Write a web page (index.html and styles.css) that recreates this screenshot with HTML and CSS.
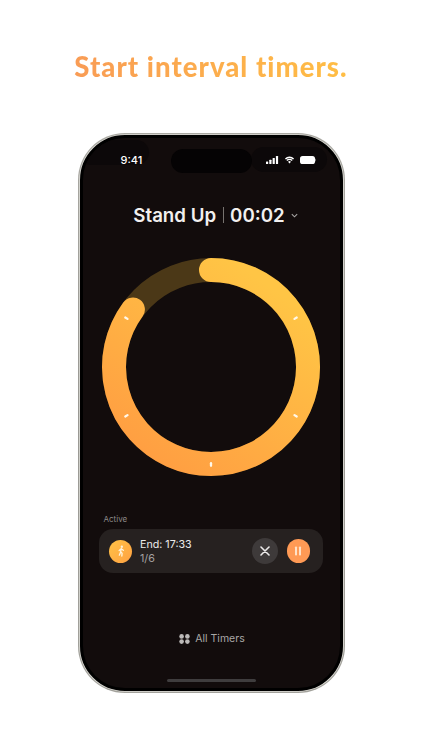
FILE: index.html
```html
<!DOCTYPE html>
<html lang="en">
<head>
<meta charset="utf-8">
<title>Start interval timers</title>
<link rel="stylesheet" href="styles.css">
</head>
<body>
<main class="page">
  <h1 class="headline">Start interval timers.</h1>
  <div class="phone">
    <div class="screen">
      <span class="blob blob-left"></span>
      <span class="blob blob-right"></span>
      <span class="island"></span>
      <div class="status">
        <span class="clock">9:41</span>
        <span class="status-icons">
          <svg class="sig" viewBox="0 0 13 8"><rect x="0" y="5.4" width="2.2" height="2.6" rx=".5"/><rect x="3.3" y="3.8" width="2.2" height="4.2" rx=".5"/><rect x="6.6" y="2" width="2.2" height="6" rx=".5"/><rect x="9.9" y="0" width="2.2" height="8" rx=".5"/></svg>
          <svg class="wifi" viewBox="0 0 12 9"><path d="M1.4 3.3A6.5 6.5 0 0 1 10.6 3.3M3 5a4.2 4.2 0 0 1 6 0" fill="none" stroke="#fff" stroke-width="1.5"/><path d="M4.4 6.5a2.3 2.3 0 0 1 3.2 0L6 8.3z" fill="#fff"/></svg>
          <svg class="batt" viewBox="0 0 16 8"><rect x="0" y="0" width="15" height="8" rx="2.6" fill="#fff"/><rect x="15.2" y="2.6" width=".8" height="2.8" rx=".4" fill="#8a8a8a"/></svg>
        </span>
      </div>
      <div class="title-row">
        <span class="name">Stand Up</span>
        <span class="divider"></span>
        <span class="time">00:02</span>
        <svg class="chev" viewBox="0 0 6 4"><path d="M.7.8 3 3.1 5.3.8" fill="none" stroke="#a8a6a5" stroke-width=".9"/></svg>
      </div>
      <svg class="ring" viewBox="0 0 220 220">
        <defs>
          <linearGradient id="ringGrad" gradientUnits="userSpaceOnUse" x1="170" y1="30" x2="50" y2="200">
            <stop offset="0" stop-color="#ffc545"/>
            <stop offset="1" stop-color="#ff9f42"/>
          </linearGradient>
        </defs>
        <circle cx="110" cy="110" r="97" fill="none" stroke="#4b3817" stroke-width="24"/>
        <path d="M110 13A97 97 0 1 1 31.9 52.5" fill="none" stroke="url(#ringGrad)" stroke-width="24" stroke-linecap="round"/>
        <g stroke="#fff8ea" stroke-width="2.3" stroke-linecap="round">
          <line x1="110" y1="206.2" x2="110" y2="208.8"/>
          <line x1="24.3" y1="60.5" x2="26.5" y2="61.9"/>
          <line x1="24.3" y1="159.5" x2="26.5" y2="158.1"/>
          <line x1="195.7" y1="60.5" x2="193.5" y2="61.9"/>
          <line x1="195.7" y1="159.5" x2="193.5" y2="158.1"/>
        </g>
      </svg>
      <p class="section-label">Active</p>
      <div class="card">
        <span class="avatar">
          <svg viewBox="0 0 12 14"><circle cx="7" cy="1.8" r="1.4" fill="#fff3dc"/><path d="M6.3 4 5.6 8l1.7 1.7L7 13M6.3 4.4 3.8 6.4M6.3 4.4 8.8 6.2M5.6 8.2 4 12" fill="none" stroke="#fff3dc" stroke-width="1.6" stroke-linecap="round"/></svg>
        </span>
        <div class="card-text">
          <span class="end">End: 17:33</span>
          <span class="count">1/6</span>
        </div>
        <span class="btn btn-close">
          <svg viewBox="0 0 10 10"><path d="M1 1l8 8M9 1 1 9" stroke="#eceaea" stroke-width="1.6" stroke-linecap="round"/></svg>
        </span>
        <span class="btn btn-pause">
          <svg viewBox="0 0 8 10"><rect x="1" y=".5" width="2" height="9" rx=".8" fill="#ffe2c8"/><rect x="5" y=".5" width="2" height="9" rx=".8" fill="#ffe2c8"/></svg>
        </span>
      </div>
      <div class="all-timers">
        <svg viewBox="0 0 11 10"><circle cx="2.6" cy="2.4" r="2.3"/><circle cx="8.4" cy="2.4" r="2.3"/><circle cx="2.6" cy="7.6" r="2.3"/><circle cx="8.4" cy="7.6" r="2.3"/></svg>
        <span>All Timers</span>
      </div>
      <span class="home"></span>
    </div>
  </div>
</main>
</body>
</html>
```
FILE: styles.css
```css
* { box-sizing: border-box; }
html, body { margin: 0; height: 750px; overflow: hidden; background: #fff; }
body { font-family: Inter, "Liberation Sans", sans-serif; }
.page { display: flex; flex-direction: column; align-items: center; height: 750px; }
.headline {
  margin: 49px 0 0;
  font: 900 27.5px/36px Lato, "Liberation Sans", sans-serif;
  letter-spacing: 1.03px;
  white-space: nowrap;
  background: linear-gradient(90deg, #f99c55, #ffbe44);
  -webkit-background-clip: text;
  background-clip: text;
  color: transparent;
}
.phone {
  margin-top: 48px;
  width: 267px;
  height: 560px;
  border-radius: 47px;
  padding: 2px;
  background: linear-gradient(180deg, #a9a8a2, #9a9994 50%, #a3a29c);
}
.screen {
  position: relative;
  width: 263px;
  height: 556px;
  border: 3px solid #000;
  border-radius: 45px;
  background: #120c0c;
  box-shadow: 0 0 0 .8px #dddcd6;
  overflow: hidden;
  display: flex;
  flex-direction: column;
  align-items: center;
  color: #fff;
}
.blob { position: absolute; background: #0c0809; border-radius: 14px; }
.blob-left { left: -5px; top: 2px; width: 71px; height: 25px; }
.blob-right { right: 13px; top: 9px; width: 76px; height: 25px; }
.island { position: absolute; left: 88px; top: 11px; width: 81px; height: 24px; border-radius: 12px; background: #050304; }
.status {
  position: relative;
  width: 100%;
  padding: 14px 24px 0 38px;
  display: flex;
  justify-content: space-between;
  align-items: center;
  height: 29px;
}
.clock { font-size: 11px; font-weight: 500; line-height: 14px; }
.status-icons { display: flex; align-items: center; gap: 5px; }
.sig { width: 13px; height: 8px; fill: #fff; }
.wifi { width: 11px; height: 8px; }
.batt { width: 16px; height: 8px; }
.title-row {
  margin-top: 36px;
  display: flex;
  align-items: center;
  height: 24px;
  margin-left: 9px;
  color: #f2f0ef;
  font-size: 18.7px;
  font-weight: 600;
  white-space: nowrap;
}
.divider { width: 1px; height: 16px; background: #77736f; margin: 0 6.5px; }
.chev { width: 7px; height: 5px; margin-left: 6px; }
.ring { width: 220px; height: 220px; margin: 29.5px 0 0 .6px; flex: none; }
.section-label {
  align-self: flex-start;
  margin: 37.5px 0 0 21px;
  font-size: 8px;
  line-height: 10px;
  color: #8d8a89;
}
.card {
  margin-top: 5px;
  width: 224px;
  height: 44px;
  border-radius: 14px;
  background: #262120;
  display: flex;
  align-items: center;
  padding: 0 13px 0 10px;
}
.avatar {
  width: 23px; height: 23px; border-radius: 50%;
  background: linear-gradient(135deg, #ffc246, #ffa142);
  display: flex; align-items: center; justify-content: center;
  flex: none;
}
.avatar svg { width: 10px; height: 12px; }
.card-text { display: flex; flex-direction: column; margin-left: 8px; padding-top: 1px; flex: 1; font-size: 10.7px; line-height: 14px; }
.end { color: #ecebea; }
.count { color: #a5a2a1; }
.btn { border-radius: 50%; display: flex; align-items: center; justify-content: center; flex: none; }
.btn-close { background: #3e3a3a; width: 26px; height: 26px; margin-right: 9px; }
.btn-close svg { width: 10px; height: 10px; }
.btn-pause { background: #ff9a55; width: 23.5px; height: 23.5px; }
.btn-pause svg { width: 8px; height: 10px; }
.all-timers {
  margin-top: 59px;
  margin-left: 2px;
  display: flex;
  align-items: center;
  gap: 5px;
  font-size: 10.5px;
  line-height: 14px;
  color: #a9a7a6;
}
.all-timers svg { width: 11px; height: 10px; fill: #bcbab9; }
.home { position: absolute; left: 84px; bottom: 6px; width: 89px; height: 3px; border-radius: 2px; background: #3f3d3e; }
```
